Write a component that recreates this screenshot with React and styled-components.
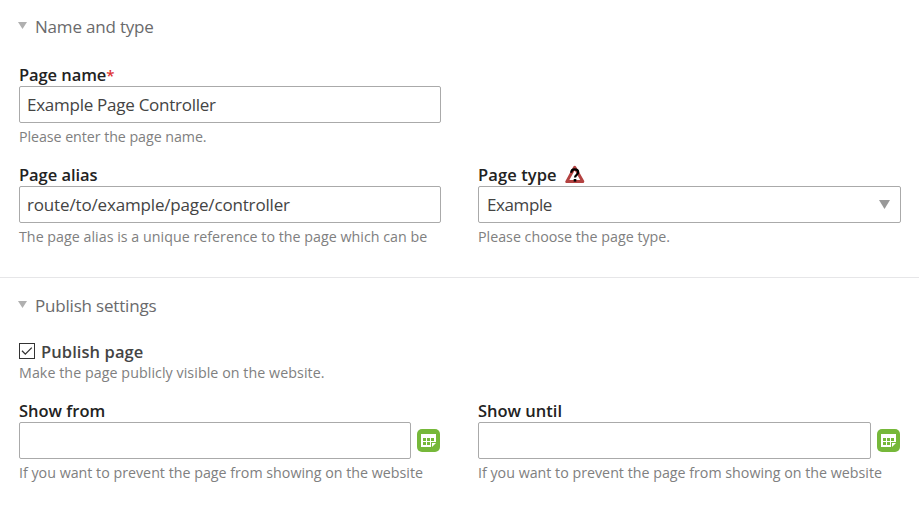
import React from "react";
import styled, { createGlobalStyle } from "styled-components";

const GlobalStyle = createGlobalStyle`
  *, *::before, *::after { box-sizing: border-box; }
  body {
    margin: 0;
    background: #fff;
    font-family: "Open Sans", "Noto Sans", sans-serif;
    overflow: hidden;
  }
`;

const Form = styled.form`
  width: 919px;
  height: 513px;
  background: #fff;
`;

const Section = styled.section`
  height: ${(p) => p.$height}px;
  padding: ${(p) => p.$top}px 18px 0 19px;
  & + & { border-top: 1px solid #e6e6e8; }
`;

const Legend = styled.h2`
  display: flex;
  align-items: center;
  height: 24px;
  margin: 0 0 ${(p) => p.$gap}px;
  font-size: 17px;
  font-weight: 400;
  line-height: 24px;
  letter-spacing: -0.19px;
  color: #6a6a6c;
  white-space: nowrap;
`;

const Toggle = styled.svg`
  width: 9px;
  height: 7px;
  margin: -3px 8px 0 -1px;
  flex: none;
`;

const Columns = styled.div`
  display: grid;
  grid-template-columns: 422px 423px;
  column-gap: 37px;
`;

const Field = styled.div`
  height: ${(p) => p.$height}px;
  min-width: 0;
`;

const Label = styled.label`
  display: flex;
  align-items: center;
  height: 22px;
  font-size: 16.5px;
  font-weight: 600;
  line-height: 22px;
  letter-spacing: ${(p) => p.$track || 0}px;
  color: #222;
  white-space: nowrap;
`;

const Required = styled.span`
  color: #d33;
  font-weight: 600;
  font-size: 15px;
`;

const Control = styled.div`
  display: flex;
  align-items: center;
  justify-content: space-between;
  flex: 1;
  height: 37px;
  padding: 0 10px 0 7px;
  border: 1px solid #aaa;
  border-radius: 2px;
  background: #fff;
  color: #444;
  font-size: 17px;
  line-height: 35px;
  letter-spacing: ${(p) => p.$track || 0}px;
  white-space: nowrap;
`;

const Select = styled(Control)`
  padding-left: 8px;
`;

const DateRow = styled.div`
  display: flex;
  align-items: center;
  gap: 6px;
  padding-right: 1px;
`;

const Hint = styled.p`
  height: 20px;
  margin: ${(p) => p.$gap ?? 4}px 0 0;
  color: #808080;
  font-size: 14.25px;
  line-height: 20px;
  letter-spacing: ${(p) => p.$track || 0}px;
  white-space: nowrap;
`;

const CheckIcon = styled.svg`
  width: 16px;
  height: 16px;
  margin: -2px 6px 0 0;
  flex: none;
`;

const CheckLabel = styled(Label)`
  color: #444;
`;

const WarningIcon = styled.svg`
  width: 21px;
  height: 19px;
  margin: -1px 0 0 8px;
  flex: none;
`;

const CalendarIcon = styled.svg`
  width: 23px;
  height: 23px;
  flex: none;
`;

function Triangle() {
  return (
    <Toggle viewBox="0 0 9 7">
      <path d="M0 0h9L4.5 7z" fill="#b0b0b0" />
    </Toggle>
  );
}

function Warning() {
  return (
    <WarningIcon viewBox="0 0 21 19">
      <path d="M9.7 2.2 1.8 16.6h16z" fill="#fff" stroke="#b34241" strokeWidth="3" strokeLinejoin="round" />
      <path d="M6.2 7.8C6.3 5.6 7.6 4.4 9.6 4.4c2.2 0 3.6 1.1 3.6 2.9 0 2.6-3.2 2.4-3.2 5.2" fill="none" stroke="#000" strokeWidth="2.2" />
      <path d="M8.7 14h2.6v2.6H8.7z" fill="#000" />
    </WarningIcon>
  );
}

function Calendar() {
  return (
    <CalendarIcon viewBox="0 0 23 23">
      <rect width="23" height="23" rx="5" fill="#76b83a" />
      <path d="M4 5h15v8.5L14.5 18H4z" fill="#fff" />
      <path d="M6 9h3v3H6zM10 9h3v3h-3zM14 9h3v3h-3zM6 13h3v3H6zM10 13h3v3h-3z" fill="#76b83a" />
      <path d="M14 13h5v5h-5z" fill="#76b83a" />
      <path d="M15 14h4l-4 4z" fill="#fff" />
    </CalendarIcon>
  );
}

function DateField({ label }) {
  return (
    <Field $height={84}>
      <Label>{label}</Label>
      <DateRow>
        <Control />
        <Calendar />
      </DateRow>
      <Hint>If you want to prevent the page from showing on the website</Hint>
    </Field>
  );
}

export default function App() {
  return (
    <>
      <GlobalStyle />
      <Form>
        <Section $height={277} $top={15}>
          <Legend $gap={25}><Triangle />Name and type</Legend>
          <Columns>
            <Field $height={100}>
              <Label $track={-0.08}>Page name<Required>*</Required></Label>
              <Control $track={-0.26}>Example Page Controller</Control>
              <Hint $track={-0.06}>Please enter the page name.</Hint>
            </Field>
          </Columns>
          <Columns>
            <Field $height={84}>
              <Label $track={-0.05}>Page alias</Label>
              <Control $track={-0.16}>route/to/example/page/controller</Control>
              <Hint $track={0.02}>The page alias is a unique reference to the page which can be</Hint>
            </Field>
            <Field $height={84}>
              <Label $track={0.1}>Page type<Warning /></Label>
              <Select $track={-0.4}>
                Example
                <svg width="11" height="9" viewBox="0 0 11 9">
                  <path d="M0 0h11L5.5 9z" fill="#999" />
                </svg>
              </Select>
              <Hint>Please choose the page type.</Hint>
            </Field>
          </Columns>
        </Section>
        <Section $height={236} $top={16}>
          <Legend $gap={23}><Triangle />Publish settings</Legend>
          <Field $height={59}>
            <CheckLabel $track={0.08}>
              <CheckIcon viewBox="0 0 16 16">
                <rect x=".5" y=".5" width="15" height="15" fill="#fff" stroke="#333" />
                <path d="m3 7.8 3.3 3.3 6.5-6.5" fill="none" stroke="#333" strokeWidth="1.3" />
              </CheckIcon>
              Publish page
            </CheckLabel>
            <Hint $gap={0} $track={0.06}>Make the page publicly visible on the website.</Hint>
          </Field>
          <Columns>
            <DateField label="Show from" />
            <DateField label="Show until" />
          </Columns>
        </Section>
      </Form>
    </>
  );
}
